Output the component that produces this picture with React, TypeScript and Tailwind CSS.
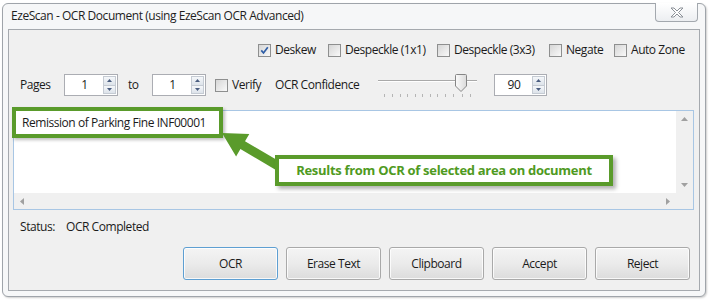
import React from "react";

function CheckBox({ checked = false }: { checked?: boolean }) {
  return (
    <span className="relative flex h-[13px] w-[13px] shrink-0 items-center justify-center border border-[#8e8f8f] bg-gradient-to-br from-[#d6d6d6] to-[#f9f9f9]">
      {checked && (
        <svg width="9" height="9" viewBox="0 0 9 9">
          <path d="M1.3 4.4 L3.5 7 L7.8 1.3" fill="none" stroke="#2f5ea6" strokeWidth="1.7" />
        </svg>
      )}
    </span>
  );
}

function SpinArrows() {
  return (
    <div className="flex w-[13px] flex-col">
      <div className="flex flex-1 items-center justify-center border border-[#c5cbd3] bg-gradient-to-b from-[#f5f7fa] to-[#dde3ea]">
        <svg width="5" height="3" viewBox="0 0 5 3">
          <path d="M0 3 L2.5 0 L5 3 Z" fill="#4a5d80" />
        </svg>
      </div>
      <div className="flex flex-1 items-center justify-center border border-t-0 border-[#c5cbd3] bg-gradient-to-b from-[#f5f7fa] to-[#dde3ea]">
        <svg width="5" height="3" viewBox="0 0 5 3">
          <path d="M0 0 L2.5 3 L5 0 Z" fill="#4a5d80" />
        </svg>
      </div>
    </div>
  );
}

function Spinner({ value, w }: { value: string; w: string }) {
  return (
    <div className={`flex h-[22px] ${w} shrink-0 border border-[#abadb3] bg-white p-[1px]`}>
      <div className="flex flex-1 items-center justify-center text-[12px] text-[#1b1b1b]">{value}</div>
      <SpinArrows />
    </div>
  );
}

function Slider() {
  const ticks = [384, 392, 400, 407, 415, 422, 430, 437, 445, 453, 462, 470];
  return (
    <svg width="100" height="26" viewBox="378 72 100 26" className="shrink-0">
      <line x1="378" y1="80.5" x2="477" y2="80.5" stroke="#a9a9a9" strokeWidth="1" />
      <line x1="378" y1="81.5" x2="477" y2="81.5" stroke="#ffffff" strokeWidth="1" />
      {ticks.map((t) => (
        <line key={t} x1={t + 0.5} y1="94" x2={t + 0.5} y2="97" stroke="#b5b5b5" strokeWidth="1" />
      ))}
      <defs>
        <linearGradient id="thumb" x1="0" y1="0" x2="1" y2="0">
          <stop offset="0" stopColor="#fbfbfb" />
          <stop offset="1" stopColor="#dadada" />
        </linearGradient>
      </defs>
      <path d="M455.5 75.5 Q455.5 74.5 456.5 74.5 L465.5 74.5 Q466.5 74.5 466.5 75.5 L466.5 86 L461 91.5 L455.5 86 Z" fill="url(#thumb)" stroke="#858585" strokeWidth="1" />
    </svg>
  );
}

function Btn({ label, focused = false }: { label: string; focused?: boolean }) {
  return (
    <div
      className={`flex h-[33px] w-[95px] items-center justify-center rounded-[3px] border ${
        focused ? "border-[#5e9fd2]" : "border-[#a9a9a9]"
      } bg-gradient-to-b from-[#f4f4f4] via-[#ebebeb] to-[#dcdcdc] text-[12px] text-[#1b1b1b] shadow-[inset_0_0_0_1px_rgba(255,255,255,0.8)]`}
    >
      {label}
    </div>
  );
}

export default function App() {
  return (
    <div className="relative h-[300px] w-[710px] overflow-hidden bg-white font-['Open_Sans',sans-serif] text-[12px] tracking-[-0.45px] text-[#1b1b1b]">
      {/* window */}
      <div className="ml-[2px] mt-[3px] flex h-[294px] w-[704px] flex-col rounded-[6px] border border-[#9fa4aa] bg-[#f6f7f8] px-[5px] pb-[5px] shadow-[1px_1px_2px_rgba(0,0,0,0.2)]">
        {/* title bar */}
        <div className="flex h-[25px] items-start justify-between">
          <div className="pl-[3px] pt-[4px] text-[12px] leading-[16px] text-[#1e1e1e]">
            EzeScan - OCR Document (using EzeScan OCR Advanced)
          </div>
          <div className="-mt-[1px] mr-[2px] flex h-[19px] w-[43px] items-center justify-center rounded-b-[4px] border border-t-0 border-[#a3a8ae] bg-gradient-to-b from-[#ffffff] to-[#eceef1]">
            <svg width="14" height="11" viewBox="0 0 14 11">
              <path
                d="M1 1 L4 1 L7 4 L10 1 L13 1 L8.5 5.5 L13 10 L10 10 L7 7 L4 10 L1 10 L5.5 5.5 Z"
                fill="#ffffff"
                stroke="#8a8f96"
                strokeWidth="1"
                strokeLinejoin="round"
              />
            </svg>
          </div>
        </div>
        {/* client */}
        <div className="flex flex-1 flex-col border border-[#a5a9ae] bg-[#f0f0f0]">
          {/* row 1 */}
          <div className="mt-[12px] flex h-[16px] items-center">
            <div className="w-[249px] shrink-0" />
            <div className="flex w-[70px] shrink-0 items-center">
              <CheckBox checked />
              <span className="ml-[4px]">Deskew</span>
            </div>
            <div className="flex w-[109px] shrink-0 items-center">
              <CheckBox />
              <span className="ml-[4px]">Despeckle (1x1)</span>
            </div>
            <div className="flex w-[112px] shrink-0 items-center">
              <CheckBox />
              <span className="ml-[4px]">Despeckle (3x3)</span>
            </div>
            <div className="flex w-[65px] shrink-0 items-center">
              <CheckBox />
              <span className="ml-[4px]">Negate</span>
            </div>
            <div className="flex shrink-0 items-center">
              <CheckBox />
              <span className="ml-[4px]">Auto Zone</span>
            </div>
          </div>
          {/* row 2 */}
          <div className="mt-[16px] flex h-[22px] items-center">
            <div className="w-[55px] shrink-0 pl-[11px]">Pages</div>
            <Spinner value="1" w="w-[54px]" />
            <div className="w-[34px] shrink-0 pl-[10px]">to</div>
            <Spinner value="1" w="w-[54px]" />
            <div className="w-[9px] shrink-0" />
            <CheckBox />
            <div className="w-[47px] shrink-0 pl-[4px]">Verify</div>
            <div className="w-[103px] shrink-0">OCR Confidence</div>
            <Slider />
            <div className="w-[16px] shrink-0" />
            <Spinner value="90" w="w-[53px]" />
          </div>
          {/* text area */}
          <div className="ml-[4px] mt-[14px] flex h-[100px] w-[681px] flex-col border border-[#a8c6e4] bg-white">
            <div className="flex flex-1">
              <div className="flex-1 pl-[8px] pt-[4px] leading-[16px]">Remission of Parking Fine INF00001</div>
              <div className="flex w-[17px] flex-col items-center justify-between bg-[#f0f0f0] py-[6px]">
                <svg width="7" height="4" viewBox="0 0 7 4">
                  <path d="M0 4 L3.5 0 L7 4 Z" fill="#a0a0a0" />
                </svg>
                <svg width="7" height="4" viewBox="0 0 7 4">
                  <path d="M0 0 L3.5 4 L7 0 Z" fill="#a0a0a0" />
                </svg>
              </div>
            </div>
            <div className="flex h-[16px]">
              <div className="flex flex-1 items-center justify-between bg-[#f0f0f0] px-[6px]">
                <svg width="4" height="7" viewBox="0 0 4 7">
                  <path d="M4 0 L0 3.5 L4 7 Z" fill="#a0a0a0" />
                </svg>
                <svg width="4" height="7" viewBox="0 0 4 7">
                  <path d="M0 0 L4 3.5 L0 7 Z" fill="#a0a0a0" />
                </svg>
              </div>
              <div className="w-[17px] bg-[#f0f0f0]" />
            </div>
          </div>
          {/* status */}
          <div className="mt-[9px] flex h-[16px] items-center">
            <div className="w-[57px] shrink-0 pl-[11px]">Status:</div>
            <div>OCR Completed</div>
          </div>
          {/* buttons */}
          <div className="mt-[12px] flex justify-end gap-[8px] pr-[9px]">
            <Btn label="OCR" focused />
            <Btn label="Erase Text" />
            <Btn label="Clipboard" />
            <Btn label="Accept" />
            <Btn label="Reject" />
          </div>
        </div>
      </div>

      {/* annotation overlay */}
      <div className="absolute left-[12px] top-[107px] h-[31px] w-[211px] border-[4px] border-[#5a9b2b] shadow-[2px_2px_3px_rgba(0,0,0,0.25)]" />
      <svg className="absolute left-0 top-0" width="710" height="300" viewBox="0 0 710 300">
        <polygon
          points="222,133 249.3,134 245,141.3 284.7,164.6 280.1,172.4 240.4,149.1 236.1,156.4"
          fill="#5a9b2b"
        />
      </svg>
      <div className="absolute left-[275px] top-[155px] flex h-[31px] w-[338px] items-center justify-center border-[4px] border-[#5a9b2b] bg-white text-[13px] font-bold tracking-[-0.3px] text-[#4f9a22] shadow-[3px_3px_4px_rgba(0,0,0,0.3)]">
        Results from OCR of selected area on document
      </div>
    </div>
  );
}
